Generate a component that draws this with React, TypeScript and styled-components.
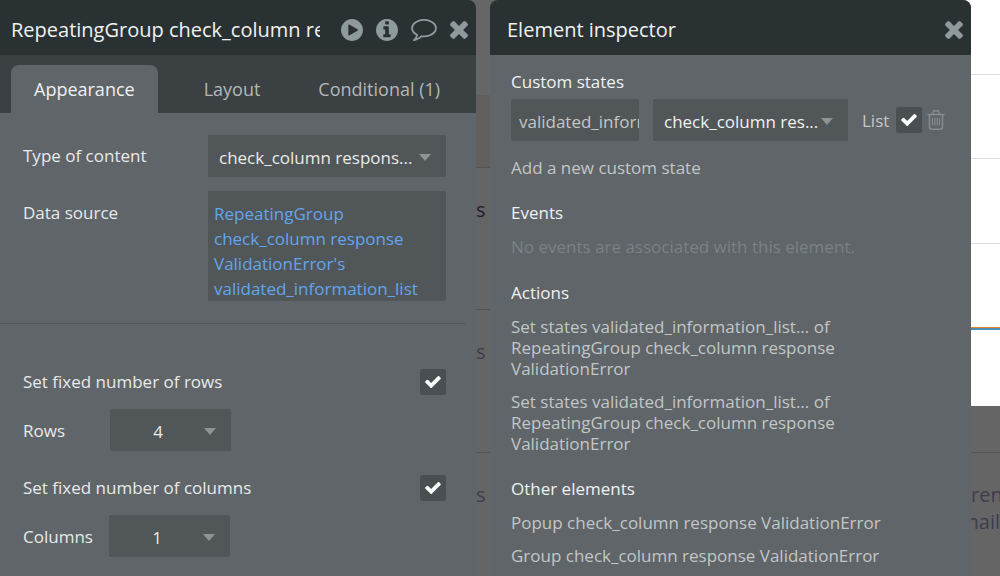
import React, { useState } from "react";
import styled, { createGlobalStyle } from "styled-components";

const GlobalStyle = createGlobalStyle`
  *, *::before, *::after { box-sizing: border-box; }
  body {
    margin: 0;
    background: #666666;
    font-family: "Open Sans", "Noto Sans", sans-serif;
    font-size: 17px;
    line-height: 21px;
    color: #e9eaea;
  }
  button, input, select { font: inherit; color: inherit; margin: 0; border: 0; }
  h2, h3, p, ul { margin: 0; padding: 0; font-weight: 400; }
`;

const Workspace = styled.div`
  display: grid;
  grid-template-columns: minmax(0, 476fr) 14px minmax(0, 481fr) 29px;
  height: 100vh;
  min-height: 400px;
  overflow: hidden;
`;

const Panel = styled.section<{ $corners: string }>`
  position: relative;
  z-index: 1;
  min-width: 0;
  overflow: hidden;
  background: #5f6568;
  border-radius: ${(p) => p.$corners};
`;

const PanelHeader = styled.header<{ $inset: number }>`
  display: flex;
  align-items: center;
  height: 55px;
  padding: 4px 8px 0 ${(p) => p.$inset}px;
  background: #2a3133;
`;

const PanelTitle = styled.h2`
  flex: 1;
  min-width: 0;
  overflow: hidden;
  white-space: nowrap;
  font-size: 20px;
  line-height: 28px;
  color: #f0f1f1;
`;

const Tools = styled.div`
  display: flex;
  align-items: center;
  gap: 13px;
  padding-left: 21px;
`;

const IconButton = styled.button`
  display: flex;
  flex: none;
  padding: 0;
  background: none;
  color: #8f9a9d;
  cursor: pointer;
`;

const TabBar = styled.div`
  display: flex;
  height: 58px;
  padding: 10px 11px 0;
  background: #3b4042;
`;

const Tab = styled.button<{ $active?: boolean }>`
  padding: 0 23px;
  font-size: 18px;
  line-height: 24px;
  white-space: nowrap;
  border-radius: 8px 8px 0 0;
  background: ${(p) => (p.$active ? "#5f6568" : "transparent")};
  color: ${(p) => (p.$active ? "#f0f1f1" : "#b4b7b8")};
  cursor: pointer;
  & + & { margin-left: 23px; }
  & + & + & { margin-left: 12px; }
`;

const Group = styled.div`
  display: flex;
  flex-direction: column;
  gap: 14px;
  padding: 22px 30px 0 23px;
`;

const FieldLabel = styled.label<{ $width?: number }>`
  flex: none;
  width: ${(p) => (p.$width ? `${p.$width}px` : "auto")};
`;

const Field = styled.div<{ $align?: string }>`
  display: flex;
  align-items: ${(p) => p.$align ?? "center"};
  justify-content: space-between;
  & > ${FieldLabel} { padding-bottom: 2px; }
`;

const SourceLabel = styled.span`
  padding-top: 11px;
`;

const SelectBox = styled.div<{ $width: number }>`
  display: grid;
  align-items: center;
  flex: none;
  width: ${(p) => p.$width}px;
  height: 42px;
  background: #515658;
  border-radius: 2px;
`;

const NativeSelect = styled.select<{ $centered?: boolean }>`
  grid-area: 1 / 1;
  width: 100%;
  height: 42px;
  padding: ${(p) => (p.$centered ? "2px 25px 0 0" : "2px 24px 0 11px")};
  appearance: none;
  background: transparent;
  text-align: ${(p) => (p.$centered ? "center" : "left")};
  text-align-last: ${(p) => (p.$centered ? "center" : "left")};
`;

const Caret = styled.span`
  grid-area: 1 / 1;
  justify-self: end;
  margin: 2px 15px 0 0;
  border: 6px solid transparent;
  border-top: 7px solid #8e9395;
  border-bottom: 0;
  pointer-events: none;
`;

const Expression = styled.button`
  flex: 0 0 238px;
  padding: 10px 6px 0;
  text-align: left;
  line-height: 25px;
  background: #515658;
  border-radius: 2px;
  color: #63a5ec;
  cursor: pointer;
`;

const Divider = styled.hr`
  height: 1px;
  margin: 22px 10px 0 0;
  border: 0;
  background: #55595c;
`;

const CheckBox = styled.span`
  display: grid;
  place-items: center;
  flex: none;
  width: 26px;
  height: 26px;
  background: #4a4f51;
  border-radius: 2px;
  color: #ffffff;
`;

const NativeCheck = styled.input`
  grid-area: 1 / 1;
  width: 26px;
  height: 26px;
  appearance: none;
  cursor: pointer;
  & + svg { grid-area: 1 / 1; visibility: hidden; pointer-events: none; }
  &:checked + svg { visibility: visible; }
`;

const Settings = styled.div`
  display: flex;
  flex-direction: column;
  gap: 24px;
  padding: 45px 30px 0 23px;
`;

const SettingGroup = styled.div`
  display: flex;
  flex-direction: column;
  gap: 14px;
`;

const NumberField = styled.div`
  display: flex;
  align-items: center;
`;

const Inspector = styled.div`
  display: flex;
  flex-direction: column;
  gap: 24px;
  padding: 16px 24px 0 21px;
  color: #c3c6c7;
`;

const Heading = styled.h3`
  margin-bottom: 13px;
  font-size: 17px;
  color: #f0f1f1;
`;

const StateHeading = styled(Heading)`
  margin-bottom: 7px;
`;

const StateRow = styled.div`
  display: flex;
  align-items: center;
  margin-bottom: 16px;
`;

const StateName = styled.input`
  flex: none;
  width: 128px;
  height: 42px;
  margin-right: 14px;
  padding: 2px 0 0 8px;
  background: #515658;
  border-radius: 2px;
`;

const StateType = styled.div`
  flex: none;
  margin-right: 14px;
  color: #f0f1f1;
`;

const ListLabel = styled.label`
  display: flex;
  flex: none;
  align-items: center;
  gap: 7px;
  margin-right: 5px;
`;

const LinkButton = styled.button`
  display: block;
  padding: 0;
  background: none;
  text-align: left;
  cursor: pointer;
`;

const Muted = styled.p`
  line-height: 22px;
  color: #7c8284;
`;

const LinkList = styled.ul`
  display: flex;
  flex-direction: column;
  gap: 12px;
  list-style: none;
`;

const PageStrip = styled.div`
  display: flex;
  flex-direction: column;
  min-width: 0;
  margin-left: -10px;
  overflow: hidden;
  font-size: 20px;
  line-height: 27px;
`;

const PageRow = styled.div<{
  $height: number;
  $fill?: string;
  $line?: string;
  $text?: string;
}>`
  flex: none;
  height: ${(p) => p.$height}px;
  padding: 28px 0 0 10px;
  background: ${(p) => p.$fill ?? "#666565"};
  border-bottom: 1px solid ${(p) => p.$line ?? "#555454"};
  color: ${(p) => p.$text ?? "#3d3d4d"};
`;

const SelectedRow = styled(PageRow)`
  border-top: 2px solid #4a8fb8;
`;

const PageLine = styled.div<{ $end?: boolean }>`
  display: flex;
  justify-content: ${(p) => (p.$end ? "flex-end" : "flex-start")};
`;

const paths = {
  close: {
    box: "302 366 1188 1188",
    d: "M1490 1322q0 40-28 68l-136 136q-28 28-68 28t-68-28l-294-294-294 294q-28 28-68 28t-68-28l-136-136q-28-28-28-68t28-68l294-294-294-294q-28-28-28-68t28-68l136-136q28-28 68-28t68 28l294 294 294-294q28-28 68-28t68 28l136 136q28 28 28 68t-28 68l-294 294 294 294q28 28 28 68z",
  },
  check: {
    box: "121 334 1550 1188",
    d: "M1671 566q0 40-28 68l-724 724-136 136q-28 28-68 28t-68-28l-136-136-362-362q-28-28-28-68t28-68l136-136q28-28 68-28t68 28l294 295 656-657q28-28 68-28t68 28l136 136q28 28 28 68z",
  },
  play: {
    box: "128 128 1536 1536",
    d: "M896 128q209 0 385.5 103t279.5 279.5 103 385.5-103 385.5-279.5 279.5-385.5 103-385.5-103-279.5-279.5-103-385.5 103-385.5 279.5-279.5 385.5-103zm384 823q32-18 32-55t-32-55l-544-320q-31-19-64-1-32 19-32 56v640q0 37 32 56 16 8 32 8 17 0 32-9z",
  },
  info: {
    box: "128 128 1536 1536",
    d: "M1152 1376v-160q0-14-9-23t-23-9h-96v-512q0-14-9-23t-23-9h-320q-14 0-23 9t-9 23v160q0 14 9 23t23 9h96v320h-96q-14 0-23 9t-9 23v160q0 14 9 23t23 9h448q14 0 23-9t9-23zm-128-896v-160q0-14-9-23t-23-9h-192q-14 0-23 9t-9 23v160q0 14 9 23t23 9h192q14 0 23-9t9-23zm640 416q0 209-103 385.5t-279.5 279.5-385.5 103-385.5-103-279.5-279.5-103-385.5 103-385.5 279.5-279.5 385.5-103 385.5 103 279.5 279.5 103 385.5z",
  },
  comment: {
    box: "0 256 1792 1536",
    d: "M896 384q-204 0-381.5 69.5t-282 187.5-104.5 255q0 112 71.5 213.5t201.5 175.5l87 50-27 96q-24 91-70 172 152-63 275-171l43-38 57 6q69 8 130 8 204 0 381.5-69.5t282-187.5 104.5-255-104.5-255-282-187.5-381.5-69.5zm896 512q0 174-120 321.5t-326 233-450 85.5q-70 0-145-8-198 175-460 242-49 14-114 22h-5q-15 0-27-10.5t-16-27.5v-1q-3-4-.5-12t2-10 4.5-9.5l6-9 7-8.5 8-9q7-8 31-34.5t34.5-38 31-39.5 32.5-51 27-59 26-76q-157-89-247.5-220t-90.5-281q0-174 120-321.5t326-233 450-85.5 450 85.5 326 233 120 321.5z",
  },
};

function Icon({ name, width, height }: { name: keyof typeof paths; width: number; height: number }) {
  return (
    <svg width={width} height={height} viewBox={paths[name].box} fill="currentColor" aria-hidden="true">
      <path d={paths[name].d} />
    </svg>
  );
}

function TrashIcon() {
  return (
    <svg width="18" height="20" viewBox="0 0 18 20" fill="none" stroke="#878d8f" strokeWidth="1.5" aria-hidden="true">
      <path d="M0.5 4.5h17M5.5 4.3l1-2.6q.3-.9 1.2-.9h2.6q.9 0 1.2.9l1 2.6M2.500 4.800v12.200q0 2.200 2 2.200h9q2 0 2-2.200V4.800" />
      <path d="M5.5 8v7.5M7.9 8v7.5M10.2 8v7.5M12.5 8v7.5" strokeWidth="1.1" />
    </svg>
  );
}

function Select({ id, value, width, centered, label }: {
  id: string; value: string; width: number; centered?: boolean; label?: string;
}) {
  return (
    <SelectBox $width={width}>
      <NativeSelect id={id} $centered={centered} aria-label={label} defaultValue={value}>
        <option>{value}</option>
      </NativeSelect>
      <Caret />
    </SelectBox>
  );
}

function Check({ id }: { id: string }) {
  return (
    <CheckBox>
      <NativeCheck id={id} type="checkbox" defaultChecked />
      <Icon name="check" width={16} height={12} />
    </CheckBox>
  );
}

const tabs = ["Appearance", "Layout", "Conditional (1)"];
const actions = ["set-state-1", "set-state-2"];
const elements = [
  "Popup check_column response ValidationError",
  "Group check_column response ValidationError",
];

export default function App() {
  const [tab, setTab] = useState(tabs[0]);
  return (
    <>
      <GlobalStyle />
      <Workspace>
        <Panel $corners="0 8px 0 0">
          <PanelHeader $inset={11}>
            <PanelTitle>RepeatingGroup check_column re</PanelTitle>
            <Tools>
              <IconButton aria-label="Preview"><Icon name="play" width={22} height={22} /></IconButton>
              <IconButton aria-label="Information"><Icon name="info" width={22} height={22} /></IconButton>
              <IconButton aria-label="Comment"><Icon name="comment" width={26} height={22} /></IconButton>
              <IconButton aria-label="Close"><Icon name="close" width={18} height={18} /></IconButton>
            </Tools>
          </PanelHeader>
          <TabBar role="tablist">
            {tabs.map((name) => (
              <Tab key={name} role="tab" aria-selected={name === tab} $active={name === tab} onClick={() => setTab(name)}>
                {name}
              </Tab>
            ))}
          </TabBar>
          <Group>
            <Field>
              <FieldLabel htmlFor="content-type">Type of content</FieldLabel>
              <Select id="content-type" value="check_column respons..." width={238} />
            </Field>
            <Field $align="stretch">
              <SourceLabel id="source-label">Data source</SourceLabel>
              <Expression aria-describedby="source-label">
                RepeatingGroup check_column response ValidationError's validated_information_list
              </Expression>
            </Field>
          </Group>
          <Divider />
          <Settings>
            <SettingGroup>
              <Field>
                <FieldLabel htmlFor="fixed-rows">Set fixed number of rows</FieldLabel>
                <Check id="fixed-rows" />
              </Field>
              <NumberField>
                <FieldLabel htmlFor="rows" $width={87}>Rows</FieldLabel>
                <Select id="rows" value="4" width={121} centered />
              </NumberField>
            </SettingGroup>
            <SettingGroup>
              <Field>
                <FieldLabel htmlFor="fixed-columns">Set fixed number of columns</FieldLabel>
                <Check id="fixed-columns" />
              </Field>
              <NumberField>
                <FieldLabel htmlFor="columns" $width={86}>Columns</FieldLabel>
                <Select id="columns" value="1" width={121} centered />
              </NumberField>
            </SettingGroup>
          </Settings>
        </Panel>

        <PageStrip>
          <PageRow $height={96} $fill="#676666" $line="#605f5f" />
          <PageRow $height={72} $fill="#625f5f" />
          <PageRow $height={142} $text="#1d1d30">s</PageRow>
          <PageRow $height={143}>s</PageRow>
          <PageRow $height={143}>s</PageRow>
        </PageStrip>

        <Panel $corners="8px 8px 0 0">
          <PanelHeader $inset={17}>
            <PanelTitle>Element inspector</PanelTitle>
            <IconButton aria-label="Close inspector"><Icon name="close" width={18} height={18} /></IconButton>
          </PanelHeader>
          <Inspector>
            <div>
              <StateHeading>Custom states</StateHeading>
              <StateRow>
                <StateName aria-label="State name" defaultValue="validated_information_list" />
                <StateType>
                  <Select id="state-type" label="State type" value="check_column res..." width={195} />
                </StateType>
                <ListLabel htmlFor="state-list">List <Check id="state-list" /></ListLabel>
                <IconButton aria-label="Delete state"><TrashIcon /></IconButton>
              </StateRow>
              <LinkButton>Add a new custom state</LinkButton>
            </div>
            <div>
              <Heading>Events</Heading>
              <Muted>No events are associated with this element.</Muted>
            </div>
            <div>
              <Heading>Actions</Heading>
              <LinkList>
                {actions.map((id) => (
                  <li key={id}>
                    <LinkButton>
                      Set states validated_information_list... of<br />
                      RepeatingGroup check_column response<br />
                      ValidationError
                    </LinkButton>
                  </li>
                ))}
              </LinkList>
            </div>
            <div>
              <Heading>Other elements</Heading>
              <LinkList>
                {elements.map((name) => (
                  <li key={name}><LinkButton>{name}</LinkButton></li>
                ))}
              </LinkList>
            </div>
          </Inspector>
        </Panel>

        <PageStrip>
          <PageRow $height={75} $fill="#ffffff" $line="#dcdce5" />
          <PageRow $height={84} $fill="#ffffff" $line="#dcdce5" />
          <PageRow $height={85} $fill="#ffffff" $line="#dcdce5" />
          <PageRow $height={84} $fill="#ffffff" $line="#e0892b" />
          <SelectedRow $height={78} $fill="#ffffff" $line="#ffffff" />
          <PageRow $height={47} />
          <PageRow $height={143}>
            <PageLine>ren</PageLine>
            <PageLine $end>mail</PageLine>
          </PageRow>
        </PageStrip>
      </Workspace>
    </>
  );
}
